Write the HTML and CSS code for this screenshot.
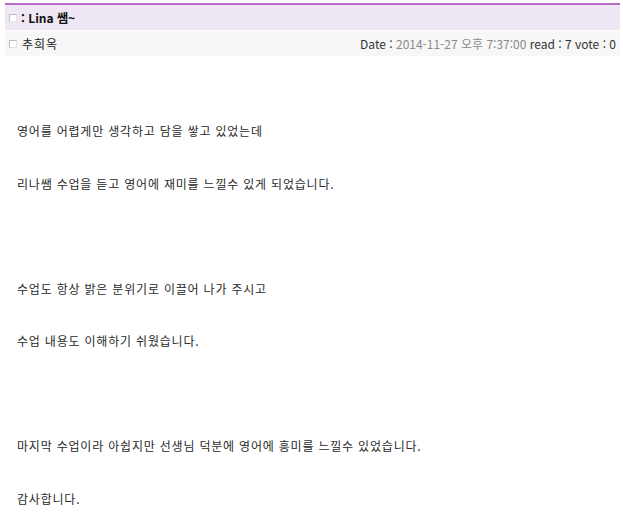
FILE: index.html
```html
<!DOCTYPE html>
<html lang="ko">
<head>
  <meta charset="UTF-8">
  <title>Lina 쌤~</title>
  <link rel="stylesheet" href="styles.css">
</head>
<body>
  <div class="board">
    <div class="title-bar">
      <span class="box"></span>
      <span class="title">: Lina 쌤~</span>
    </div>
    <div class="info-bar">
      <div class="writer">
        <span class="box"></span>
        <span>추희옥</span>
      </div>
      <div class="meta">
        Date : <span class="dim">2014-11-27 오후 7:37:00</span> read : 7 vote : 0
      </div>
    </div>

    <div class="content">
      <p>영어를 어렵게만 생각하고 담을 쌓고 있었는데</p>
      <p>리나쌤 수업을 듣고 영어에 재미를 느낄수 있게 되었습니다.</p>
      <p class="blank"></p>
      <p>수업도 항상 밝은 분위기로 이끌어 나가 주시고</p>
      <p>수업 내용도 이해하기 쉬웠습니다.</p>
      <p class="blank"></p>
      <p>마지막 수업이라 아쉽지만 선생님 덕분에 영어에 흥미를 느낄수 있었습니다.</p>
      <p>감사합니다.</p>
    </div>
  </div>
</body>
</html>
```

FILE: styles.css
```css
body {
  margin: 0;
  background: #ffffff;
  color: #222222;
  font-family: "Noto Sans CJK KR", "Liberation Sans", sans-serif;
  font-size: 12px;
}

.board {
  width: 615px;
  margin: 3px 0 0 5px;
}

.title-bar {
  border-top: 2px solid #b76bc9;
  background: #f0e7f5;
  height: 25px;
  display: flex;
  align-items: center;
  padding-left: 4px;
  gap: 4px;
}

.title {
  font-weight: bold;
  color: #111111;
  font-size: 12px;
}

.box {
  display: inline-block;
  width: 6px;
  height: 6px;
  border: 1px solid #bdbdbd;
  border-right-color: #e4e4e4;
  border-bottom-color: #e4e4e4;
  background: #ffffff;
}

.info-bar {
  background: #f7f7f7;
  height: 25px;
  margin-top: 1px;
  display: flex;
  align-items: center;
  justify-content: space-between;
  padding: 0 4px 0 4px;
}

.writer {
  display: flex;
  align-items: center;
  gap: 5px;
  letter-spacing: 1px;
}

.meta {
  color: #333333;
}

.dim {
  color: #8a8a8a;
}

.content {
  padding: 49px 0 0 12px;
  letter-spacing: 0.8px;
  color: #2a2a2a;
}

.content p {
  margin: 0;
  height: 52.5px;
  line-height: 52.5px;
}
```
